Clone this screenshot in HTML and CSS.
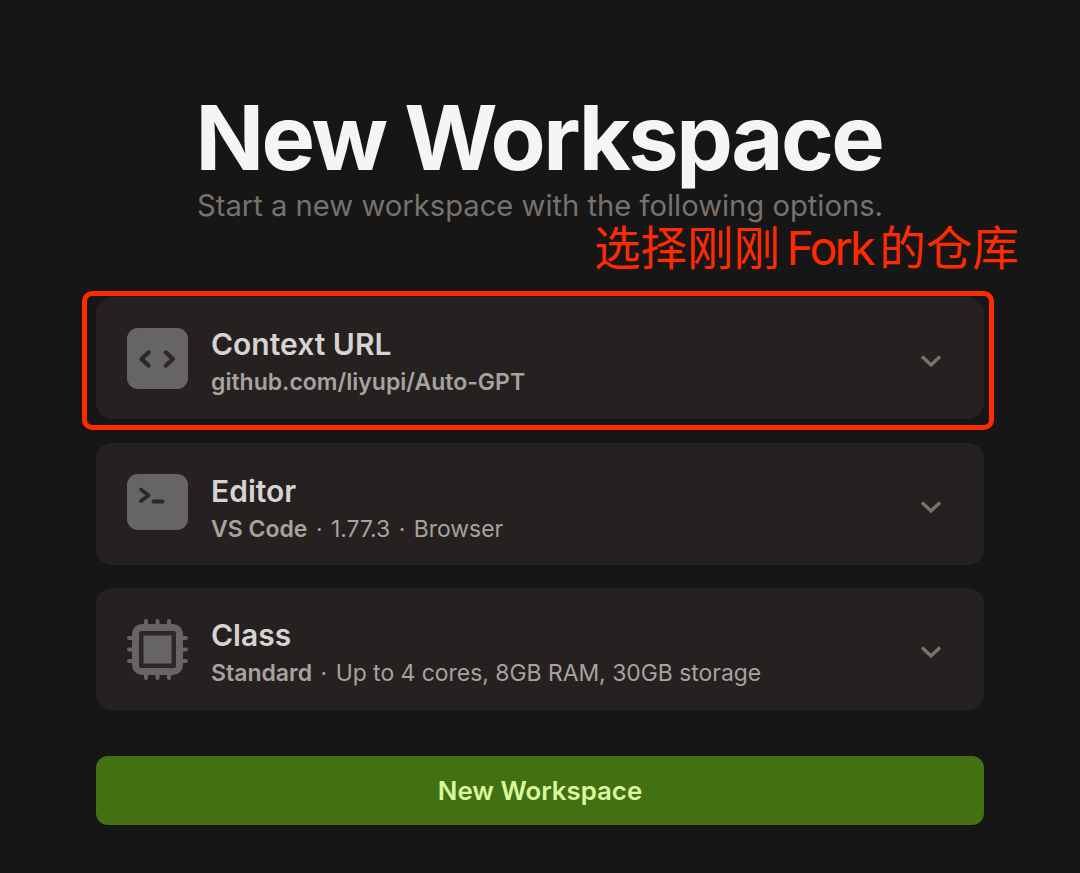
FILE: index.html
```html
<!DOCTYPE html>
<html lang="en">
<head>
  <meta charset="UTF-8" />
  <meta name="viewport" content="width=device-width, initial-scale=1.0" />
  <title>New Workspace</title>
  <link rel="stylesheet" href="styles.css">
</head>
<body>
<div class="container">
  <h1 class="title">New Workspace</h1>
  <p class="subtitle">Start a new workspace with the following options.</p>

  <div class="options">
    <div class="option">
      <div class="option-icon">
        <svg width="61" height="61" viewBox="0 0 61 61" fill="none" stroke="#2b2827" stroke-width="4.4" stroke-linecap="round" stroke-linejoin="round">
          <path d="M21.500 24.500 L14.500 31 L21.500 37.500" />
          <path d="M39 24.500 L46 31 L39 37.500" />
        </svg>
      </div>
      <div class="option-text">
        <div class="option-name">Context URL</div>
        <div class="option-detail"><b>github.com/liyupi/Auto-GPT</b></div>
      </div>
      <svg class="chevron" width="24" height="16" viewBox="0 0 24 16" fill="none" stroke="#78716c" stroke-width="3.4">
        <path d="M3 3.500 L12 12 L21 3.500" />
      </svg>
    </div>

    <div class="option">
      <div class="option-icon option-icon-short">
        <svg width="61" height="56" viewBox="0 0 61 56" fill="none" stroke="#2b2827" stroke-width="3.8" stroke-linecap="round" stroke-linejoin="round">
          <path d="M14 15.500 L21.500 21.300 L14 27" />
          <path d="M26.500 27.500 H35.500" />
        </svg>
      </div>
      <div class="option-text option-text-low">
        <div class="option-name">Editor</div>
        <div class="option-detail"><b>VS Code</b><span class="dot">·</span>1.77.3<span class="dot">·</span>Browser</div>
      </div>
      <svg class="chevron" width="24" height="16" viewBox="0 0 24 16" fill="none" stroke="#78716c" stroke-width="3.4">
        <path d="M3 3.500 L12 12 L21 3.500" />
      </svg>
    </div>

    <div class="option">
      <div class="option-icon option-icon-chip">
        <svg width="61" height="61" viewBox="0 0 61 61" fill="none">
          <path d="M19 2v6M30.500 2v6M42 2v6M19 53v6M30.500 53v6M42 53v6M2 19h6M2 30.500h6M2 42h6M53 19h6M53 30.500h6M53 42h6" stroke="#666564" stroke-width="4" stroke-linecap="round" />
          <rect x="5" y="5" width="51" height="51" rx="10" fill="#666564" />
          <rect x="12" y="12" width="37" height="37" rx="2" fill="#2b2827" />
          <rect x="16.500" y="16.500" width="28" height="28" fill="#666564" />
        </svg>
      </div>
      <div class="option-text">
        <div class="option-name">Class</div>
        <div class="option-detail"><b>Standard</b><span class="dot">·</span>Up to 4 cores, 8GB RAM, 30GB storage</div>
      </div>
      <svg class="chevron" width="24" height="16" viewBox="0 0 24 16" fill="none" stroke="#78716c" stroke-width="3.4">
        <path d="M3 3.500 L12 12 L21 3.500" />
      </svg>
    </div>
  </div>

  <button class="submit">New Workspace</button>

  <div class="note">选择刚刚 <span class="note-latin">Fork</span> 的仓库</div>
  <div class="note-box"></div>
</div>
</body>
</html>
```

FILE: styles.css
```css
body {
  font-family: Inter, "Noto Sans CJK SC", sans-serif;
  background: #161616;
  color: #f5f5f4;
  margin: 0;
  padding: 0;
}
.container {
  position: relative;
  width: 888px;
  height: 873px;
  margin: 0 auto;
  padding-top: 89px;
  box-sizing: border-box;
}
.title {
  margin: 0;
  padding-right: 2px;
  font-size: 90px;
  font-weight: 700;
  line-height: 98px;
  letter-spacing: -2.55px;
  text-align: center;
  color: #f5f5f4;
}
.subtitle {
  margin: 0;
  font-size: 29.2px;
  line-height: 38px;
  text-align: center;
  color: #78716c;
}
.options {
  display: flex;
  flex-direction: column;
  gap: 23.5px;
  margin-top: 72px;
}
.option {
  display: flex;
  align-items: center;
  height: 122px;
  padding: 0 41px 0 31px;
  background: #252120;
  border-radius: 16px;
}
.option-icon {
  display: flex;
  flex: none;
  width: 61px;
  height: 61px;
  background: #666564;
  border-radius: 11px;
}
.option-icon-short {
  height: 56px;
  margin-bottom: 3px;
}
.option-icon-chip {
  background: none;
}
.option-text {
  flex: 1;
  margin-left: 23px;
  padding-top: 9px;
}
.option-text-low {
  padding-top: 13px;
}
.option-name {
  font-size: 30px;
  font-weight: 600;
  line-height: 38px;
  color: #d6d3d1;
}
.option-detail {
  font-size: 22.9px;
  font-weight: 400;
  line-height: 38px;
  color: #a8a29e;
}
.option-detail b {
  font-size: 23px;
  font-weight: 600;
}
.dot {
  margin: 0 8.5px;
}
.chevron {
  flex: none;
  margin-top: 6px;
}
.submit {
  display: block;
  width: 100%;
  height: 69px;
  margin-top: 46px;
  border: none;
  border-radius: 12px;
  background: #437012;
  color: #d9f99d;
  font-family: inherit;
  font-size: 25.8px;
  font-weight: 600;
}
.note {
  position: absolute;
  left: 498px;
  top: 220px;
  font-size: 46.5px;
  line-height: 56px;
  word-spacing: -6.5px;
  white-space: nowrap;
  color: #ff2a00;
}
.note-latin {
  letter-spacing: -2.8px;
}
.note-box {
  position: absolute;
  left: -14px;
  top: 291px;
  width: 912px;
  height: 139px;
  box-sizing: border-box;
  border: 5.5px solid #ff2a00;
  border-radius: 10px;
}
```
